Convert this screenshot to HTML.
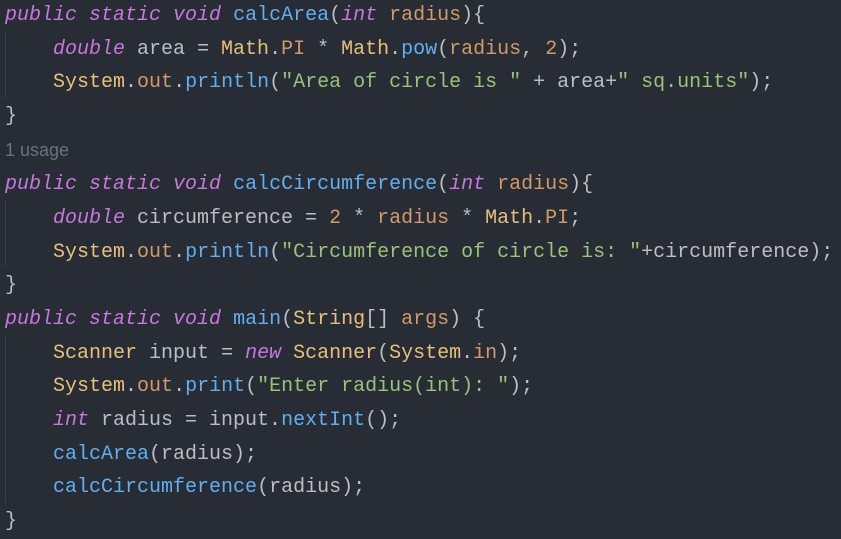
<!DOCTYPE html>
<html><head><meta charset="utf-8"><style>
html,body{margin:0;padding:0;background:#282c34;width:841px;height:537px;overflow:hidden}
.c{position:absolute;left:5px;top:-1px;font-family:"Liberation Mono",monospace;font-size:20px;line-height:33.65px;color:#bbbec4;white-space:pre}
.k{color:#c678dd;font-style:italic}
.f{color:#61afef}
.t{color:#e5c07b}
.o{color:#d19a66}
.s{color:#98c379}
.u{font-family:"Liberation Sans",sans-serif;font-size:18px;color:#6b717d}
.g{position:absolute;left:5px;width:1px;background:#3b3f47}
</style></head><body>
<div class="g" style="top:32px;height:66px"></div>
<div class="g" style="top:200px;height:66px"></div>
<div class="g" style="top:335px;height:168px"></div>
<div class="c"><span class="k">public static void</span> <span class="f">calcArea</span>(<span class="k">int</span> <span class="o">radius</span>){
    <span class="k">double</span> area = <span class="t">Math</span>.<span class="o">PI</span> * <span class="t">Math</span>.<span class="f">pow</span>(<span class="o">radius</span>, <span class="o">2</span>);
    <span class="t">System</span>.<span class="o">out</span>.<span class="f">println</span>(<span class="s">"Area of circle is "</span> + area+<span class="s">" sq.units"</span>);
}
<span class="u">1 usage</span>
<span class="k">public static void</span> <span class="f">calcCircumference</span>(<span class="k">int</span> <span class="o">radius</span>){
    <span class="k">double</span> circumference = <span class="o">2</span> * <span class="o">radius</span> * <span class="t">Math</span>.<span class="o">PI</span>;
    <span class="t">System</span>.<span class="o">out</span>.<span class="f">println</span>(<span class="s">"Circumference of circle is: "</span>+circumference);
}
<span class="k">public static void</span> <span class="f">main</span>(<span class="t">String</span>[] <span class="o">args</span>) {
    <span class="t">Scanner</span> input = <span class="k">new</span> <span class="t">Scanner</span>(<span class="t">System</span>.<span class="o">in</span>);
    <span class="t">System</span>.<span class="o">out</span>.<span class="f">print</span>(<span class="s">"Enter radius(int): "</span>);
    <span class="k">int</span> radius = input.<span class="f">nextInt</span>();
    <span class="f">calcArea</span>(radius);
    <span class="f">calcCircumference</span>(radius);
}</div>
</body></html>
